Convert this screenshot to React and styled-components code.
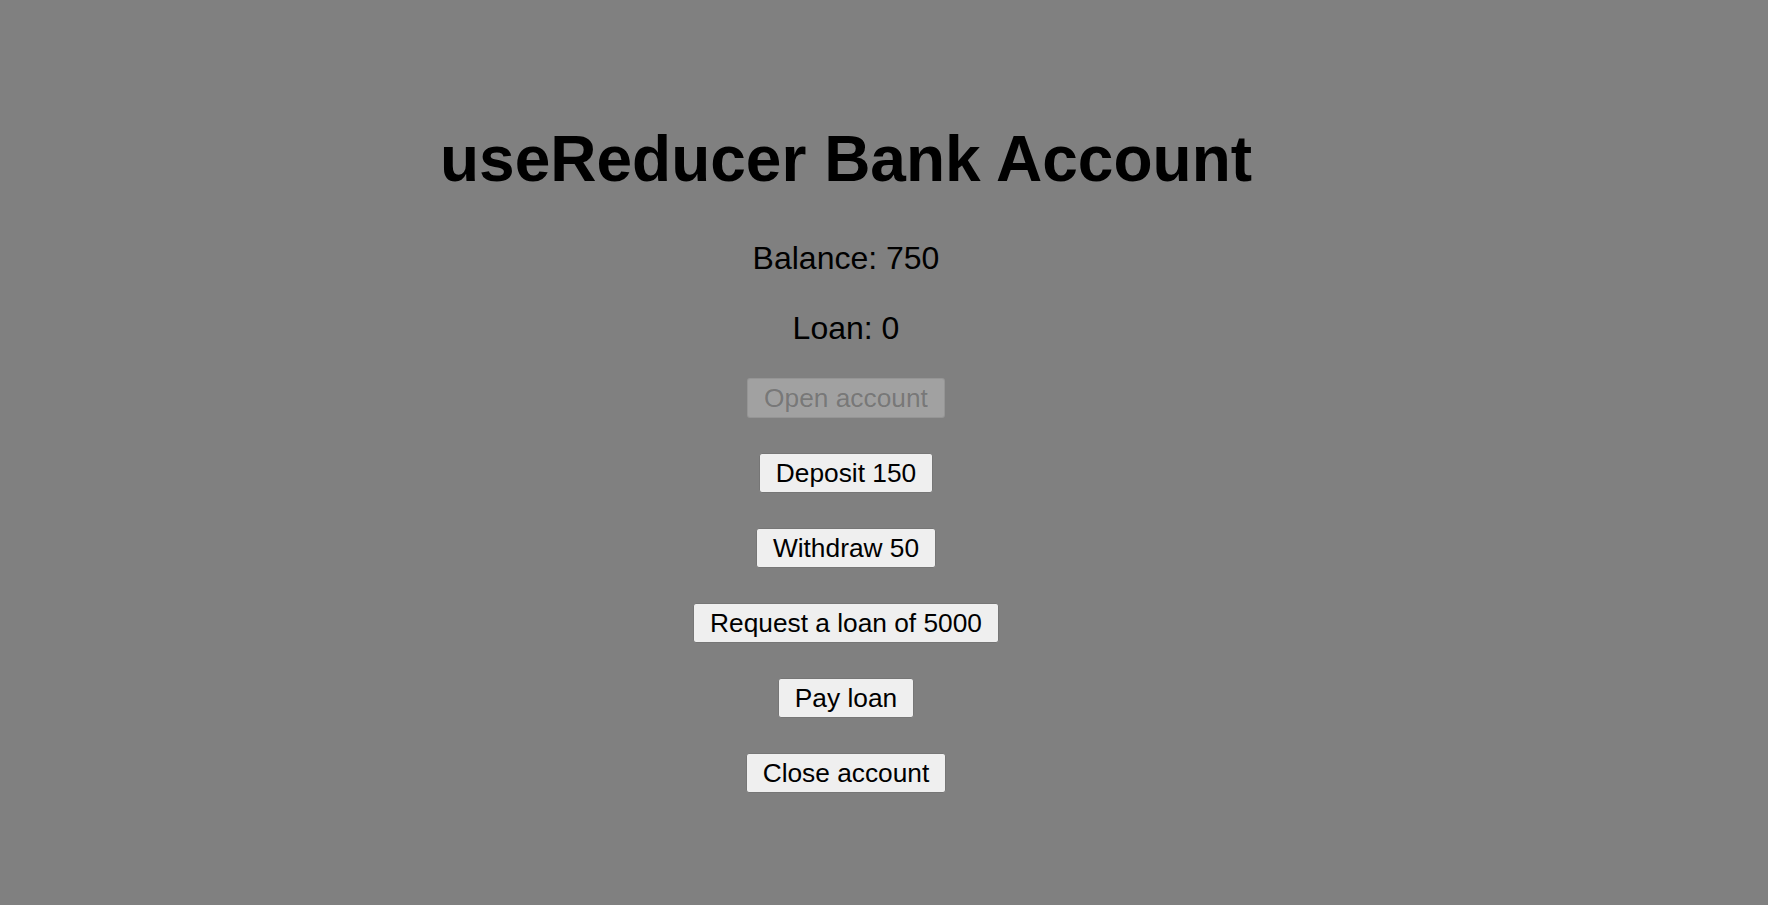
import React from "react";
import styled, { createGlobalStyle } from "styled-components";

const GlobalStyle = createGlobalStyle`
  html, body {
    margin: 0;
    padding: 0;
    background: #808080;
  }
  body {
    font-family: "Liberation Sans", Arial, Helvetica, sans-serif;
    color: #000;
    min-height: 905px;
  }
`;

const Page = styled.main`
  width: 1692px;
  display: flex;
  flex-direction: column;
  align-items: center;
  padding-top: 122px;
`;

const Title = styled.h1`
  margin: 0 0 44px;
  font-size: 64px;
  font-weight: 700;
  line-height: normal;
`;

const Stat = styled.p`
  margin: 0 0 ${(p) => p.$gap}px;
  font-size: 32px;
  line-height: normal;
`;

const Actions = styled.div`
  display: flex;
  flex-direction: column;
  align-items: center;
  gap: 35px;
`;

const Button = styled.button`
  height: 40px;
  padding: 0 16px;
  font-family: "Liberation Sans", Arial, Helvetica, sans-serif;
  font-size: 26.3px;
  color: #000;
  background: #efefef;
  border: 1px solid #767676;
  border-radius: 3px;
  cursor: pointer;

  &:disabled {
    cursor: default;
    color: rgba(16, 16, 16, 0.3);
    background: rgba(239, 239, 239, 0.3);
    border-color: rgba(118, 118, 118, 0.3);
  }
`;

export default function App() {
  const balance = 750;
  const loan = 0;
  return (
    <>
      <GlobalStyle />
      <Page>
        <Title>useReducer Bank Account</Title>
        <Stat $gap={33}>Balance: {balance}</Stat>
        <Stat $gap={31}>Loan: {loan}</Stat>
        <Actions>
          <Button disabled>Open account</Button>
          <Button>Deposit 150</Button>
          <Button>Withdraw 50</Button>
          <Button>Request a loan of 5000</Button>
          <Button>Pay loan</Button>
          <Button>Close account</Button>
        </Actions>
      </Page>
    </>
  );
}
